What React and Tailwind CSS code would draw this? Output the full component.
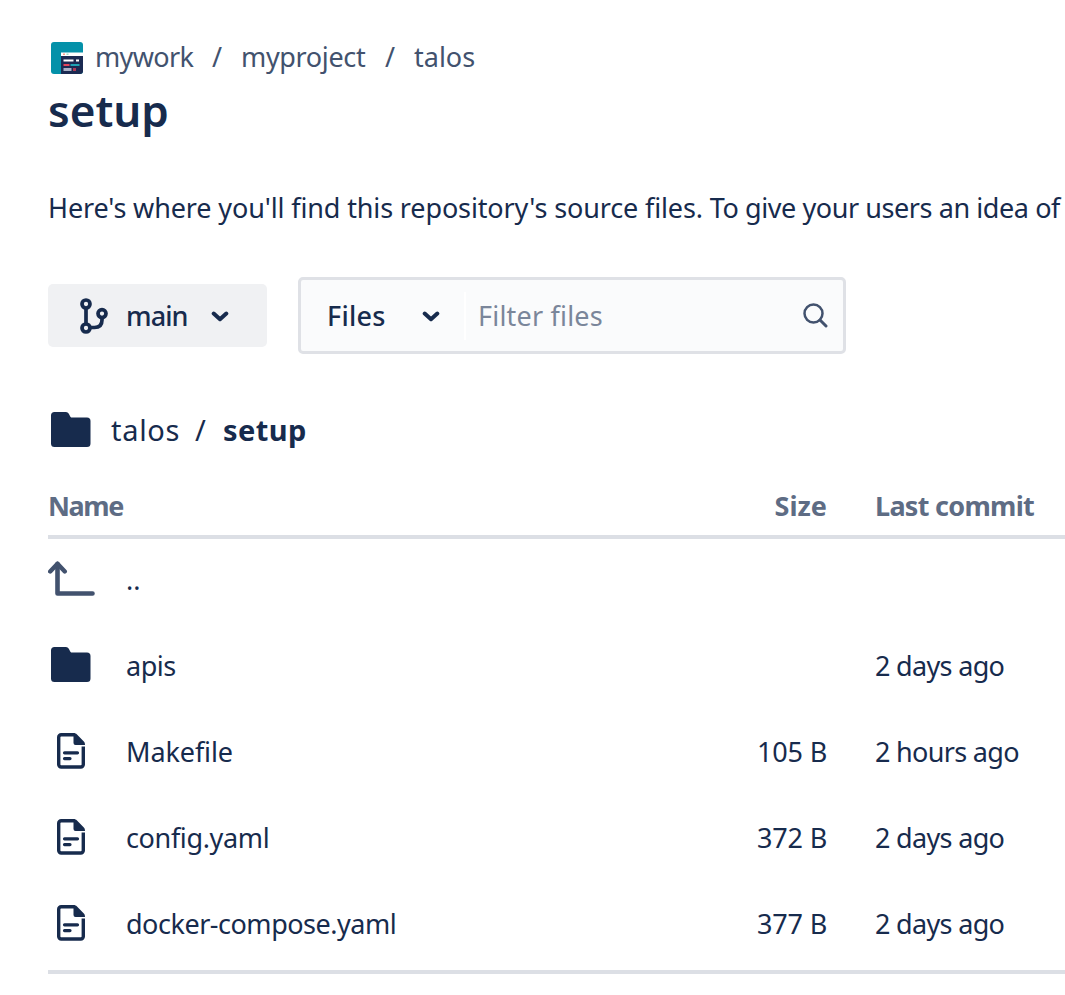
import React from "react";

function RepoAvatar() {
  return (
    <svg width="32" height="32" viewBox="0 0 32 32" className="block shrink-0">
      <rect width="32" height="32" rx="3" fill="#0491a9" />
      <path d="M10 10.500H32V14H10Z" fill="#ffffff" />
      <path d="M12 11.500h2v1.500h-2z" fill="#f7a08c" />
      <path d="M15.500 11.500h2v1.500h-2z" fill="#9bdcc0" />
      <path d="M10 14H32V29a3 3 0 0 1-3 3H10Z" fill="#1b2a52" />
      <path d="M12.500 17.500h10v2h-10zM25 17.500h3v2h-3z" fill="#ffffff" />
      <path d="M12.500 22h6v2h-6z" fill="#e2455a" />
      <path d="M19.500 22h9v2h-9z" fill="#1fa3b4" />
      <path d="M12.500 26h8v3h-8z" fill="#a9b1c6" />
      <path d="M22 26h3v3h-3z" fill="#b03a56" />
    </svg>
  );
}

function FolderIcon() {
  return (
    <svg width="40" height="36" viewBox="0 0 40 36" className="block shrink-0">
      <path d="M0 3.500A3.500 3.500 0 0 1 3.500 0H14.500C17 0 17.800 1.500 18.600 3.200C19.300 4.800 19.700 5.500 21 5.500H36A3.500 3.500 0 0 1 39.500 9V31.500A3.500 3.500 0 0 1 36 35H3.500A3.500 3.500 0 0 1 0 31.500Z" fill="#172b4d" />
    </svg>
  );
}

function FileIcon() {
  return (
    <svg width="28" height="36" viewBox="0 0 28 36" className="block shrink-0">
      <path d="M17 1.700H4.200A2.500 2.500 0 0 0 1.700 4.200V31.500A2.500 2.500 0 0 0 4.200 34H23.800A2.500 2.500 0 0 0 26.300 31.500V13.500" fill="none" stroke="#172b4d" strokeWidth="3.400" />
      <path d="M16.500 0C18.200 0 19 .5 20 1.500L26.600 8.200C27.600 9.200 28 10 28 12H18.500A2 2 0 0 1 16.500 10Z" fill="#172b4d" />
      <path d="M7.500 19.800H20.500M7.500 25.600H13" fill="none" stroke="#172b4d" strokeWidth="3.200" strokeLinecap="round" />
    </svg>
  );
}

function ParentIcon() {
  return (
    <svg width="47" height="36" viewBox="0 0 47 36" className="block shrink-0">
      <path d="M9.500 3V32.500H44.500" fill="none" stroke="#42526e" strokeWidth="4.600" strokeLinecap="round" strokeLinejoin="round" />
      <path d="M2.200 10.500L9.500 2.700L16.800 10.500" fill="none" stroke="#42526e" strokeWidth="4.400" strokeLinecap="round" strokeLinejoin="round" />
    </svg>
  );
}

function BranchIcon() {
  return (
    <svg width="28" height="36" viewBox="0 0 28 36" fill="none" stroke="#172b4d" strokeWidth="3.700" className="block shrink-0">
      <circle cx="6" cy="6" r="4" />
      <circle cx="6" cy="30" r="4" />
      <circle cx="22" cy="15.600" r="4" />
      <path d="M6 10V26M10 29.500H14.500C19.500 29.500 22 27 22 22V19.500" />
    </svg>
  );
}

function Chevron() {
  return (
    <svg width="18" height="12" viewBox="0 0 18 12" className="block shrink-0">
      <path d="M2.700 3.500L9 9.200L15.300 3.500" fill="none" stroke="#172b4d" strokeWidth="4" strokeLinecap="round" strokeLinejoin="round" />
    </svg>
  );
}

function SearchIcon() {
  return (
    <svg width="25" height="25" viewBox="0 0 25 25" fill="none" stroke="#42526e" strokeWidth="2.500" className="block shrink-0">
      <circle cx="10.500" cy="10.500" r="9" />
      <path d="M17 17L23 23" strokeWidth="3" strokeLinecap="round" />
    </svg>
  );
}

const rows = [
  { icon: "parent", name: "..", size: "", commit: "", track: "" },
  { icon: "folder", name: "apis", size: "", commit: "2 days ago", track: "tracking-[-0.5px]" },
  { icon: "file", name: "Makefile", size: "105 B", commit: "2 hours ago", track: "tracking-[-0.1px]" },
  { icon: "file", name: "config.yaml", size: "372 B", commit: "2 days ago", track: "tracking-[-0.36px]" },
  { icon: "file", name: "docker-compose.yaml", size: "377 B", commit: "2 days ago", track: "tracking-[-0.48px]" },
];

function Row({ row }) {
  return (
    <div className="flex h-[86.100px] items-center">
      <div className="flex w-[78px] shrink-0">
        {row.icon === "parent" && <div className="-mt-0.5"><ParentIcon /></div>}
        {row.icon === "folder" && <div className="ml-[3px] -mt-[3px]"><FolderIcon /></div>}
        {row.icon === "file" && <div className="ml-[9px] -mt-[3px]"><FileIcon /></div>}
      </div>
      <span className={"flex-1 " + row.track}>{row.name}</span>
      <span className="w-[120px] text-right tracking-[-0.2px]">{row.size}</span>
      <span className="ml-12 w-[190px] tracking-[-0.68px]">{row.commit}</span>
    </div>
  );
}

export default function App() {
  return (
    <div className="h-[995px] w-[1065px] overflow-hidden bg-white pl-12 font-['Noto_Sans',sans-serif] text-[27px] leading-9 whitespace-nowrap text-[#172b4d]">
      <nav className="flex h-[74px] items-end pl-[3px] text-[#42526e]">
        <RepoAvatar />
        <div className="-mb-px ml-3 flex">
          <span className="w-[117px] tracking-[-0.65px]">mywork</span>
          <span className="w-[29px]">/</span>
          <span className="w-[144px] tracking-[-0.35px]">myproject</span>
          <span className="w-[29px]">/</span>
          <span>talos</span>
        </div>
      </nav>
      <h1 className="flex h-[71px] items-center text-[44px] font-semibold">setup</h1>
      <p className="mt-[45px] h-9">
        <span className="tracking-[-0.13px]">Here's where you'll find this repository's source files. </span>
        <span className="tracking-[-0.42px]">To give your users an idea of</span>
      </p>
      <div className="mt-[51px] flex h-[77px] items-center">
        <button className="flex h-[63px] w-[219px] items-center rounded-[5px] bg-[#f0f1f3] pl-8 text-left font-medium">
          <BranchIcon />
          <span className="ml-[18px] w-[85px] tracking-[-0.9px]">main</span>
          <Chevron />
        </button>
        <div className="ml-[31px] flex h-[77px] w-[548px] items-center rounded-[5px] border-[3.500px] border-[#dfe1e6] bg-[#fafbfc] pl-[26px]">
          <span className="w-[95px] font-medium tracking-[0.2px]">Files</span>
          <Chevron />
          <span className="ml-6 h-[48px] w-[2px] bg-white" />
          <span className="ml-3 flex-1 tracking-[0.2px] text-[#7a869a]">Filter files</span>
          <div className="mr-[15px]"><SearchIcon /></div>
        </div>
      </div>
      <div className="mt-[54px] flex h-[44px] items-center pl-[3px] text-[29px]">
        <FolderIcon />
        <span className="ml-5 w-[84px] tracking-[0.7px]">talos</span>
        <span className="w-7">/</span>
        <span className="font-bold tracking-[0.4px]">setup</span>
      </div>
      <div className="mt-6 flex h-[63px] items-center border-b-4 border-[#dcdfe5] font-bold text-[#5e6c84]">
        <span className="flex-1 tracking-[-1.400px]">Name</span>
        <span className="w-[120px] text-right">Size</span>
        <span className="ml-12 w-[190px] tracking-[-0.7px]">Last commit</span>
      </div>
      <div className="-mt-0.5 border-b-4 border-[#dcdfe5] pb-[2.500px]">
        {rows.map((row) => <Row key={row.name} row={row} />)}
      </div>
    </div>
  );
}
